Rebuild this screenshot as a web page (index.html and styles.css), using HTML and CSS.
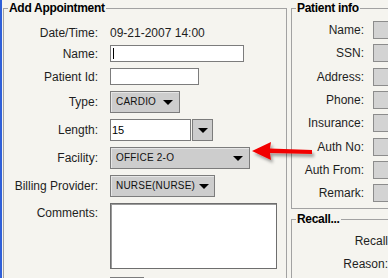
FILE: index.html
```html
<!DOCTYPE html>
<html lang="en">
<head>
  <meta charset="UTF-8" />
  <title>Add Appointment</title>
  <link rel="stylesheet" href="styles.css">
</head>
<body>

  <fieldset class="panel appt">
    <legend>Add Appointment</legend>
    <div class="rows">
      <div class="row row-date">
        <span class="label">Date/Time:</span>
        <span class="value">09-21-2007 14:00</span>
      </div>
      <div class="row">
        <label for="name">Name:</label>
        <input type="text" id="name" class="text text-name" />
      </div>
      <div class="row">
        <label for="pid">Patient Id:</label>
        <input type="text" id="pid" class="text text-pid" />
      </div>
      <div class="row">
        <span class="label">Type:</span>
        <div class="combo combo-type"><span>CARDIO</span><i class="caret"></i></div>
      </div>
      <div class="row">
        <label for="length">Length:</label>
        <input type="text" id="length" class="text text-length" value="15" />
        <div class="drop"><i class="caret"></i></div>
      </div>
      <div class="row">
        <span class="label">Facility:</span>
        <div class="combo combo-facility"><span>OFFICE 2-O</span><i class="caret"></i></div>
      </div>
      <div class="row">
        <span class="label">Billing Provider:</span>
        <div class="combo combo-billing"><span>NURSE(NURSE)</span><i class="caret"></i></div>
      </div>
      <div class="row row-top">
        <label for="comments">Comments:</label>
        <textarea id="comments" class="comments"></textarea>
      </div>
      <div class="row row-last">
        <span class="label"></span>
        <div class="btn"></div>
      </div>
    </div>
  </fieldset>

  <div class="side">
    <fieldset class="panel info">
      <legend>Patient info</legend>
      <div class="rows">
        <div class="row"><span class="label">Name:</span><div class="box"></div></div>
        <div class="row"><span class="label">SSN:</span><div class="box"></div></div>
        <div class="row"><span class="label">Address:</span><div class="box"></div></div>
        <div class="row"><span class="label">Phone:</span><div class="box"></div></div>
        <div class="row"><span class="label">Insurance:</span><div class="box"></div></div>
        <div class="row"><span class="label">Auth No:</span><div class="box"></div></div>
        <div class="row"><span class="label">Auth From:</span><div class="box"></div></div>
        <div class="row"><span class="label">Remark:</span><div class="box"></div></div>
      </div>
    </fieldset>

    <fieldset class="panel recall">
      <legend>Recall...</legend>
      <div class="rows">
        <div class="row"><span class="label label-recall">Recall</span></div>
        <div class="row"><span class="label">Reason:</span></div>
      </div>
    </fieldset>
  </div>

  <!-- red callout pointing at the facility box -->
  <svg class="pointer" width="70" height="32" viewBox="0 0 70 32">
    <defs>
      <filter id="shade" x="-20%" y="-40%" width="140%" height="180%">
        <feDropShadow dx="2" dy="3" stdDeviation="1.4" flood-color="#000" flood-opacity="0.35" />
      </filter>
    </defs>
    <polygon points="4,15 23,6 22,12.5 64,14 64,18 22,17 23,24" fill="#f20000" filter="url(#shade)" />
  </svg>

</body>
</html>
```

FILE: styles.css
```css
html {
  overflow: hidden;
}
body {
  margin: 0;
  padding-left: 1px;
  border-left: 2px solid #2f5fd8;
  background: #f5f4ef;
  font: 12px/16px "Liberation Sans", Arial, sans-serif;
  color: #1e1e1e;
  display: flex;
  align-items: flex-start;
  overflow: hidden;
}
.panel {
  margin: 0;
  padding: 0;
  min-width: 0;
  box-sizing: border-box;
  border: 1px solid #a2a2a2;
}
.panel legend {
  margin-left: 4px;
  padding: 0 1px;
  font-weight: bold;
  font-size: 12px;
  line-height: 16px;
  letter-spacing: -0.3px;
  color: #000;
}
.rows {
  display: flex;
  flex-direction: column;
}
.row {
  display: flex;
  align-items: center;
}
.row > label, .row > .label {
  flex: none;
  text-align: right;
  white-space: nowrap;
}

/* left panel */
.appt {
  flex: none;
  width: 284px;
  height: 320px;
  padding-top: 9px;
}
.appt .rows {
  gap: 6px;
}
.appt .row > label, .appt .row > .label {
  width: 94px;
  margin-right: 12px;
}
.row-date {
  height: 16px;
  margin-bottom: -2px;
}
.row-top {
  align-items: flex-start;
}
.row-top label {
  padding-top: 2px;
}
.row-last {
  margin-top: 2px;
}
.text {
  box-sizing: border-box;
  height: 17px;
  margin: 0;
  padding: 0 2px;
  border: 1px solid #7c7c7c;
  background: #fff;
  font: 11px "Liberation Sans", Arial, sans-serif;
  color: #000;
  outline: none;
}
.text-name {
  width: 134px;
  background: linear-gradient(#000, #000) no-repeat 2px 2px / 1px 11px, #fff;
}
.text-pid {
  width: 89px;
}
.text-length {
  width: 81px;
  height: 22px;
  padding-left: 1px;
}
.drop {
  box-sizing: border-box;
  width: 21px;
  height: 22px;
  margin-left: 1px;
  border: 1px solid #7c7c7c;
  background: #cdcdcd;
  display: flex;
  align-items: center;
  justify-content: center;
}
.combo {
  box-sizing: border-box;
  height: 22px;
  padding: 0 6px 0 5px;
  border: 1px solid #7c7c7c;
  box-shadow: inset 1px 1px #e6e6e6;
  background: #cdcdcd;
  display: flex;
  align-items: center;
  justify-content: space-between;
  font-size: 10px;
  letter-spacing: 0.2px;
  color: #111;
}
.combo-type {
  width: 70px;
}
.combo-facility {
  width: 140px;
}
.combo-billing {
  width: 105px;
  padding-right: 5px;
}
.caret {
  width: 0;
  height: 0;
  border-style: solid;
  border-width: 5px 5px 0;
  border-color: #000 transparent transparent;
}
.comments {
  box-sizing: border-box;
  width: 167px;
  height: 66px;
  margin: 0;
  border: 1px solid #6e6e6e;
  box-shadow: inset 1px 1px #9a9a9a;
  background: #fff;
  resize: none;
  outline: none;
}
.btn {
  box-sizing: border-box;
  width: 34px;
  height: 14px;
  border: 1px solid #7c7c7c;
  background: #d2d2d2;
}

/* right column */
.side {
  flex: none;
  width: 130px;
  height: 320px;
  margin-left: 4px;
  display: flex;
  flex-direction: column;
  gap: 2px;
}
.info {
  padding: 5px 0 6px;
}
.info .rows {
  gap: 5.33px;
}
.info .row {
  height: 18px;
}
.info .row > .label {
  width: 72px;
  margin-right: 9px;
}
.box {
  box-sizing: border-box;
  width: 40px;
  height: 18px;
  border: 1px solid #8c8c8c;
  background: #d3d3d3;
}
.recall {
  flex: 1;
  padding-top: 5px;
}
.recall .rows {
  gap: 5px;
}
.recall .row {
  height: 18px;
}
.recall .row > .label {
  width: 96px;
}
.label-recall {
  padding-right: 1px;
}

.pointer {
  position: absolute;
  left: 248px;
  top: 136px;
}
```
